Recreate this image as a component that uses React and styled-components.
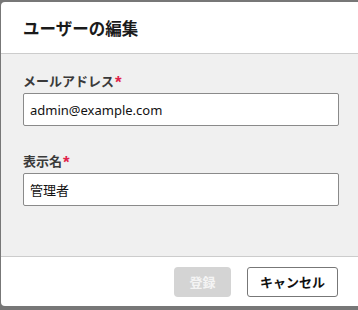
import React, { useState } from "react";
import styled, { createGlobalStyle } from "styled-components";

const GlobalStyle = createGlobalStyle`
  html, body {
    margin: 0;
    padding: 0;
    background: #777777;
    overflow: hidden;
  }
  body {
    font-family: "Noto Sans", "Noto Sans CJK JP", sans-serif;
  }
`;

const Backdrop = styled.div`
  width: 358px;
  height: 310px;
  padding: 2px 0 0 1px;
  box-sizing: border-box;
  overflow: hidden;
`;

const Modal = styled.div`
  width: 380px;
  height: 304px;
  background: #ffffff;
  border-radius: 4px;
  display: flex;
  flex-direction: column;
  overflow: hidden;
`;

const Header = styled.div`
  height: 51px;
  flex-shrink: 0;
  display: flex;
  align-items: center;
  padding: 0 22px;
  border-bottom: 1px solid #cccccc;
`;

const Title = styled.h2`
  margin: 0;
  padding-top: 1px;
  font-family: "Noto Sans CJK JP", sans-serif;
  font-size: 16.5px;
  font-weight: 700;
  color: #1a1a1a;
`;

const Body = styled.div`
  flex: 1;
  background: #f0f0f0;
  padding: 17px 42px 0 22px;
  display: flex;
  flex-direction: column;
  gap: 25px;
`;

const Field = styled.div`
  display: flex;
  flex-direction: column;
  gap: 3px;
`;

const Label = styled.label`
  display: flex;
  align-items: center;
  font-family: "Noto Sans CJK JP", sans-serif;
  font-size: 13px;
  font-weight: 700;
  line-height: 19px;
  color: #3a3a3a;
`;

const Required = styled.span`
  color: #e0224a;
  margin-left: 1px;
  font-family: "Liberation Sans", sans-serif;
  font-size: 17px;
  line-height: 10px;
  height: 10px;
  padding-top: 4px;
`;

const Input = styled.input`
  height: 33px;
  box-sizing: border-box;
  border: 1px solid #8a8a8a;
  border-radius: 2px;
  background: #ffffff;
  padding: 0 6px;
  font-family: "Noto Sans", "Noto Sans CJK JP", sans-serif;
  font-size: 13px;
  color: #111111;
  outline: none;
`;

const Footer = styled.div`
  height: 49px;
  flex-shrink: 0;
  border-top: 1px solid #cccccc;
  display: flex;
  align-items: center;
  gap: 16px;
  padding: 0 43px 0 0;
  justify-content: flex-end;
`;

const Button = styled.button`
  height: 30px;
  width: ${(p) => p.$width}px;
  box-sizing: border-box;
  border-radius: ${(p) => (p.$primary ? 4 : 3)}px;
  border: ${(p) => (p.$primary ? "none" : "1px solid #777777")};
  background: ${(p) => (p.$primary ? "#d4d4d4" : "#ffffff")};
  color: ${(p) => (p.$primary ? "#f4f4f4" : "#111111")};
  font-family: "Noto Sans CJK JP", sans-serif;
  font-size: 13px;
  font-weight: 700;
  padding: 0;
  cursor: ${(p) => (p.disabled ? "default" : "pointer")};
`;

export default function App() {
  const [email, setEmail] = useState("admin@example.com");
  const [name, setName] = useState("管理者");

  return (
    <>
      <GlobalStyle />
      <Backdrop>
        <Modal>
          <Header>
            <Title>ユーザーの編集</Title>
          </Header>
          <Body>
            <Field>
              <Label>
                メールアドレス<Required>*</Required>
              </Label>
              <Input value={email} onChange={(e) => setEmail(e.target.value)} />
            </Field>
            <Field>
              <Label>
                表示名<Required>*</Required>
              </Label>
              <Input value={name} onChange={(e) => setName(e.target.value)} />
            </Field>
          </Body>
          <Footer>
            <Button $primary $width={57} disabled>
              登録
            </Button>
            <Button $width={91}>キャンセル</Button>
          </Footer>
        </Modal>
      </Backdrop>
    </>
  );
}
